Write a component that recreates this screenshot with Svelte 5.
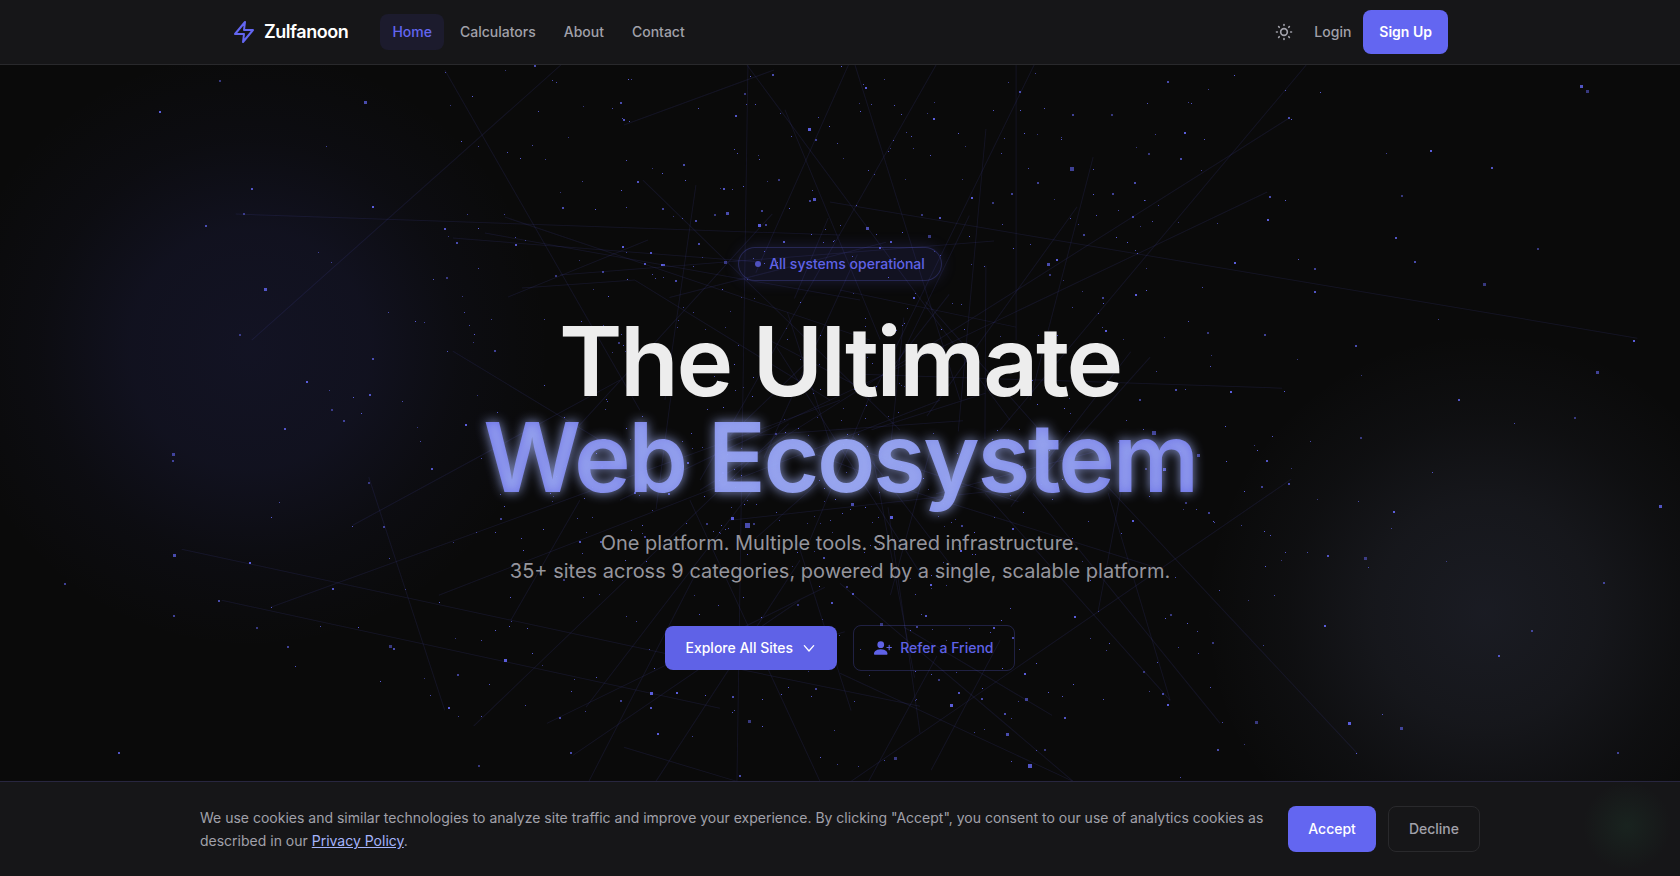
<script>
  const links = [
    { label: "Home", href: "#home", active: true },
    { label: "Calculators", href: "#calculators" },
    { label: "About", href: "#about" },
    { label: "Contact", href: "#contact" },
  ];

  let cookiesOpen = true;

  // x, y, size
  const stars = [
    [220, 81, 2], [365, 102, 3], [160, 112, 2], [326, 146, 1], [252, 189, 2], [244, 214, 2], [206, 226, 2], [373, 207, 2],
    [318, 252, 1], [265, 289, 3], [240, 335, 2], [388, 312, 1], [415, 321, 1], [424, 322, 1], [433, 279, 1], [447, 278, 2],
    [373, 359, 2], [307, 382, 2], [329, 390, 1], [370, 395, 2], [332, 410, 2], [402, 401, 1], [361, 413, 1], [344, 421, 2],
    [285, 429, 2], [417, 427, 1], [420, 441, 1], [466, 425, 2], [173, 454, 3], [445, 229, 2], [448, 236, 1], [457, 243, 2],
    [478, 228, 1], [504, 214, 1], [516, 245, 2], [450, 105, 1], [445, 72, 1], [461, 141, 1], [478, 146, 1], [538, 111, 1],
    [583, 106, 1], [621, 103, 2], [628, 79, 1], [631, 79, 1], [624, 120, 2], [568, 137, 1], [532, 145, 1], [520, 158, 1],
    [545, 159, 1], [626, 160, 1], [652, 168, 1], [684, 165, 2], [621, 190, 1], [582, 181, 1], [638, 182, 2], [560, 192, 1],
    [563, 208, 2], [595, 209, 1], [663, 209, 2], [736, 116, 2], [745, 94, 2], [773, 75, 2], [809, 129, 3], [816, 140, 2],
    [814, 199, 3], [779, 180, 2], [727, 213, 3], [759, 225, 3], [766, 225, 2], [784, 242, 2], [725, 262, 3], [699, 244, 2],
    [623, 247, 2], [603, 272, 2], [645, 264, 2], [556, 276, 2], [676, 281, 2], [474, 334, 1], [495, 351, 2], [447, 351, 1],
    [462, 296, 1], [478, 268, 1], [934, 119, 2], [1072, 169, 4], [1581, 86, 3], [1587, 91, 3], [1168, 82, 2], [1234, 75, 1],
    [1188, 102, 1], [1191, 103, 1], [1112, 115, 2], [1289, 118, 2], [1291, 119, 1], [1155, 134, 1], [1204, 139, 1],
    [1149, 154, 2], [1181, 159, 2], [1431, 151, 2], [1386, 153, 1], [1492, 168, 2], [1402, 196, 2], [1270, 197, 2],
    [1268, 220, 2], [1217, 223, 1], [1396, 238, 2], [1538, 249, 2], [1415, 262, 2], [1235, 263, 2], [1315, 269, 2],
    [1315, 292, 2], [1484, 284, 3], [1202, 287, 1], [1136, 295, 2], [1438, 319, 1], [1188, 321, 1], [1208, 333, 2],
    [1356, 346, 2], [1634, 341, 2], [1597, 372, 3], [1210, 366, 1], [1361, 375, 1], [1176, 390, 2], [1284, 391, 1],
    [1140, 400, 2], [1459, 400, 2], [1575, 418, 2], [1514, 423, 1], [1225, 426, 1], [1154, 433, 4], [1272, 436, 1],
    [1361, 438, 2], [1310, 441, 1], [1257, 450, 1], [1198, 455, 3], [940, 218, 2], [929, 236, 3], [1048, 264, 3],
    [1057, 260, 2], [1084, 235, 2], [1070, 218, 1], [1140, 226, 1], [1152, 221, 1], [972, 198, 2], [1035, 73, 1],
    [1044, 108, 1], [1037, 134, 1], [1028, 168, 1], [1116, 237, 1], [1158, 205, 1], [1096, 215, 1], [1050, 275, 2],
    [867, 228, 3], [914, 298, 2], [173, 461, 2], [432, 469, 2], [369, 483, 2], [279, 502, 1], [271, 517, 1], [384, 527, 2],
    [352, 526, 1], [453, 542, 1], [174, 555, 3], [250, 563, 2], [65, 584, 2], [333, 589, 2], [405, 589, 1], [219, 601, 2],
    [439, 602, 1], [174, 616, 2], [271, 607, 1], [257, 628, 2], [320, 626, 1], [358, 627, 1], [288, 647, 2], [295, 666, 1],
    [390, 646, 3], [394, 649, 2], [505, 660, 3], [458, 675, 2], [489, 684, 1], [424, 678, 1], [430, 695, 1], [449, 708, 2],
    [458, 716, 1], [481, 716, 1], [455, 638, 1], [481, 640, 1], [495, 630, 1], [511, 621, 1], [119, 753, 2], [479, 766, 2],
    [560, 718, 2], [651, 693, 3], [621, 701, 2], [651, 708, 2], [749, 721, 3], [747, 525, 5], [732, 518, 3], [501, 519, 2],
    [580, 542, 2], [564, 580, 2], [571, 753, 2], [658, 734, 2], [585, 711, 1], [1267, 461, 2], [1291, 468, 1],
    [1289, 484, 2], [1226, 461, 1], [1262, 487, 2], [1432, 472, 1], [1317, 499, 1], [1358, 501, 1], [1394, 512, 2],
    [1391, 528, 1], [1660, 506, 3], [1186, 503, 2], [1196, 509, 1], [1213, 521, 1], [1241, 525, 1], [1328, 556, 2],
    [1365, 558, 3], [1368, 567, 1], [1265, 566, 1], [1604, 583, 2], [1219, 590, 1], [1248, 600, 1], [1274, 595, 1],
    [1325, 626, 2], [1532, 631, 2], [1499, 656, 2], [1213, 643, 2], [1197, 631, 1], [1165, 618, 1], [1263, 645, 1],
    [1157, 662, 1], [1144, 672, 2], [1163, 694, 2], [1168, 705, 2], [1149, 691, 1], [1210, 687, 1], [1256, 722, 3],
    [1222, 722, 1], [1349, 723, 3], [1401, 728, 3], [1382, 714, 1], [1244, 744, 1], [1218, 750, 2], [1356, 753, 1],
    [1618, 753, 2], [1030, 766, 4], [895, 758, 3], [1007, 734, 3], [951, 705, 3], [1026, 699, 3], [1065, 718, 2],
    [1045, 750, 2], [1005, 714, 2], [891, 517, 3], [962, 526, 2], [1013, 529, 2], [881, 624, 3], [852, 504, 3],
    [931, 585, 2], [1098, 611, 1], [1164, 469, 3], [1146, 469, 2], [1180, 777, 1], [1073, 684, 1],
  ];

  // x1, y1, x2, y2
  const threads = [
    [445, 70, 640, 410], [252, 340, 561, 65], [236, 214, 840, 235], [624, 125, 774, 70], [748, 65, 737, 781],
    [747, 65, 1010, 420], [453, 238, 760, 262], [485, 233, 860, 300], [505, 217, 870, 340], [508, 297, 648, 240],
    [522, 288, 635, 280], [560, 275, 994, 241], [453, 351, 600, 440], [635, 280, 830, 400], [643, 180, 900, 430],
    [696, 185, 665, 400], [1016, 65, 1016, 340], [1034, 65, 870, 400], [936, 65, 700, 480], [1306, 65, 1000, 430],
    [1289, 118, 700, 490], [1267, 192, 620, 500], [830, 202, 1637, 338], [1093, 157, 1030, 400], [855, 65, 960, 400],
    [860, 374, 1282, 388], [1150, 357, 1040, 480], [840, 290, 1016, 327], [369, 477, 445, 710], [353, 525, 620, 380],
    [271, 607, 840, 400], [439, 595, 940, 400], [182, 549, 720, 665], [222, 600, 720, 708], [511, 620, 580, 500],
    [586, 707, 760, 480], [547, 723, 825, 587], [573, 755, 800, 600], [589, 781, 696, 573], [656, 781, 800, 560],
    [624, 747, 737, 781], [820, 781, 690, 500], [1291, 479, 851, 781], [1108, 487, 1357, 753], [1033, 493, 1220, 723],
    [985, 493, 1170, 700], [1108, 493, 1170, 700], [1121, 490, 1098, 611], [840, 583, 1073, 781], [840, 673, 1073, 781],
    [904, 627, 1052, 715], [1000, 640, 931, 770], [720, 665, 920, 706], [888, 507, 920, 733], [730, 520, 1000, 490],
  ];

  let seed = 41;
  function rand() {
    seed = (seed * 16807) % 2147483647;
    return seed / 2147483647;
  }
  function spread() {
    return (rand() + rand() + rand() + rand() - 2) / 2;
  }

  // fill the middle of the field
  for (let i = 0; i < 600; i++) {
    stars.push([
      Math.round(840 + spread() * 700),
      Math.round(430 + spread() * 740),
      rand() > 0.88 ? 2 : 1,
    ]);
  }
  for (let i = 0; i < 34; i++) {
    const x = 840 + spread() * 360;
    const y = 430 + spread() * 400;
    threads.push([x, y, x + spread() * 360, y + spread() * 560]);
  }

  function starOpacity(i) {
    return 0.5 + ((i * 7) % 5) * 0.1;
  }
</script>

<div class="page">
  <header class="header">
    <div class="bar">
      <a class="brand" href="#home">
        <svg width="24" height="24" viewBox="0 0 24 24" fill="none" stroke="currentColor" stroke-width="2" stroke-linecap="round" stroke-linejoin="round" aria-hidden="true">
          <path d="M13 2 3 14h9l-1 8 10-12h-9l1-8z" />
        </svg>
        <span>Zulfanoon</span>
      </a>
      <nav class="links" aria-label="Main">
        {#each links as link}
          <a class="link" class:active={link.active} href={link.href}>{link.label}</a>
        {/each}
      </nav>
      <div class="account">
        <button class="theme" type="button" aria-label="Toggle theme">
          <svg width="20" height="20" viewBox="0 0 24 24" fill="none" stroke="currentColor" stroke-width="2" stroke-linecap="round" aria-hidden="true">
            <circle cx="12" cy="12" r="4" />
            <path d="M12 3v1M12 20v1M3 12h1M20 12h1M18.4 5.6l-.7.7M6.3 17.7l-.7.7M5.6 5.6l.7.7M17.7 17.7l.7.7" />
          </svg>
        </button>
        <a class="link" href="#login">Login</a>
        <a class="btn primary signup" href="#signup">Sign Up</a>
      </div>
    </div>
  </header>

  <main class="hero">
    <div class="orb left"></div>
    <div class="orb right"></div>
    <svg class="field" viewBox="0 65 1680 788" preserveAspectRatio="xMidYMid slice" aria-hidden="true">
      {#each threads as [x1, y1, x2, y2]}
        <line {x1} {y1} {x2} {y2} />
      {/each}
      {#each stars as [x, y, size], i}
        <rect x={x - (size >> 1)} y={y - (size >> 1)} width={size} height={size} opacity={starOpacity(i)} />
      {/each}
    </svg>

    <div class="content">
      <p class="badge"><span class="dot"></span>All systems operational</p>
      <h1>
        <span class="line">The Ultimate</span>
        <span class="line glow">Web Ecosystem</span>
      </h1>
      <p class="lead">
        One platform. Multiple tools. Shared infrastructure.<br />
        35+ sites across 9 categories, powered by a single, scalable platform.
      </p>
      <div class="actions">
        <a class="btn primary" href="#sites">
          Explore All Sites
          <svg width="16" height="16" viewBox="0 0 24 24" fill="none" stroke="currentColor" stroke-width="2" stroke-linecap="round" stroke-linejoin="round" aria-hidden="true">
            <path d="m5 8.500 7 8 7-8" />
          </svg>
        </a>
        <a class="btn outline" href="#refer">
          <svg width="18" height="18" viewBox="0 0 16 16" fill="currentColor" aria-hidden="true">
            <path d="M1 14s-1 0-1-1 1-4 6-4 6 3 6 4-1 1-1 1zm5-6a3 3 0 1 0 0-6 3 3 0 0 0 0 6" />
            <path d="M13.500 5a.5.5 0 0 1 .5.5V7h1.500a.5.5 0 0 1 0 1H14v1.500a.5.5 0 0 1-1 0V8h-1.500a.5.5 0 0 1 0-1H13V5.500a.5.5 0 0 1 .5-.5" />
          </svg>
          Refer a Friend
        </a>
      </div>
    </div>
  </main>

  {#if cookiesOpen}
    <section class="cookies" aria-label="Cookie consent">
      <div class="cookies-inner">
        <p>
          We use cookies and similar technologies to analyze site traffic and improve your experience. By clicking "Accept", you consent to our use of analytics cookies as described in our <a href="#privacy">Privacy Policy</a>.
        </p>
        <div class="choices">
          <button class="btn primary" type="button" on:click={() => (cookiesOpen = false)}>Accept</button>
          <button class="btn quiet" type="button" on:click={() => (cookiesOpen = false)}>Decline</button>
        </div>
      </div>
    </section>
  {/if}
</div>

<style>
  :global(body) {
    margin: 0;
    background: #0a0a0a;
  }
  .page {
    height: 100vh;
    overflow: hidden;
    background: #0a0a0a;
    color: #ededed;
    font-family: Inter, sans-serif;
    font-size: 14px;
    line-height: 20px;
  }
  .page :global(*) {
    box-sizing: border-box;
  }
  a {
    color: inherit;
    text-decoration: none;
  }
  p,
  h1 {
    margin: 0;
  }
  svg {
    display: block;
    flex: none;
  }

  .header {
    position: relative;
    z-index: 10;
    background: #161618;
    border-bottom: 1px solid #29292c;
  }
  .bar {
    display: flex;
    align-items: center;
    height: 64px;
    max-width: 1280px;
    margin: 0 auto;
    padding: 0 32px;
  }
  .brand {
    display: flex;
    align-items: center;
    gap: 8px;
    margin-right: 32px;
    color: #fff;
    font-size: 18px;
    font-weight: 600;
    letter-spacing: -0.025em;
  }
  .brand svg {
    color: #6366f1;
  }
  .links {
    display: flex;
    gap: 4px;
  }
  .link {
    padding: 8px 12px;
    border-radius: 8px;
    color: #a1a1aa;
    font-weight: 500;
  }
  .link.active {
    background: #1c1b2d;
    color: #6366f1;
  }
  .account {
    display: flex;
    align-items: center;
    margin-left: auto;
  }
  .theme {
    padding: 8px;
    border: 0;
    border-radius: 8px;
    background: transparent;
    color: #a1a1aa;
    cursor: pointer;
  }

  .btn {
    display: inline-flex;
    align-items: center;
    justify-content: center;
    gap: 8px;
    padding: 12px 20px;
    border: 0;
    border-radius: 8px;
    font: inherit;
    font-weight: 500;
    white-space: nowrap;
    cursor: pointer;
  }
  .primary {
    background: #6366f1;
    color: #fff;
  }
  .signup {
    padding: 12px 16px;
    font-weight: 600;
  }
  .outline {
    border: 1px solid rgba(99, 102, 241, 0.25);
    color: #5f62e7;
  }
  .quiet {
    border: 1px solid #29292c;
    background: transparent;
    color: #a1a1aa;
  }

  .hero {
    position: relative;
    display: flex;
    align-items: center;
    justify-content: center;
    min-height: 90vh;
    overflow: hidden;
  }
  .orb {
    position: absolute;
    border-radius: 50%;
  }
  .left {
    top: -2%;
    left: -3%;
    width: 600px;
    height: 600px;
    background: radial-gradient(closest-side, rgba(88, 92, 241, 0.11), rgba(88, 92, 241, 0.09) 40%, rgba(88, 92, 241, 0.03) 70%, transparent);
  }
  .right {
    right: -5%;
    bottom: -5%;
    width: 560px;
    height: 560px;
    background: radial-gradient(closest-side, rgba(165, 180, 252, 0.1), rgba(160, 172, 230, 0.08) 40%, rgba(160, 172, 230, 0.03) 70%, transparent);
  }
  .field {
    position: absolute;
    inset: 0;
    width: 100%;
    height: 100%;
  }
  .field line {
    stroke: #6366f1;
    stroke-opacity: 0.11;
  }
  .field rect {
    fill: #6366f1;
    shape-rendering: crispEdges;
  }

  .content {
    position: relative;
    display: flex;
    flex-direction: column;
    align-items: center;
    text-align: center;
  }
  .badge {
    display: flex;
    align-items: center;
    gap: 8px;
    margin-bottom: 32px;
    padding: 6px 16px;
    border: 1px solid rgba(99, 102, 241, 0.25);
    border-radius: 999px;
    background: rgba(99, 102, 241, 0.1);
    box-shadow: 0 0 16px rgba(99, 102, 241, 0.2);
    color: #5f62e7;
    font-weight: 500;
  }
  .dot {
    width: 6px;
    height: 6px;
    border-radius: 50%;
    background: #4f51bd;
  }
  h1 {
    margin-bottom: 24px;
    font-size: 96px;
    font-weight: 600;
    line-height: 96px;
    letter-spacing: -0.025em;
  }
  .line {
    display: block;
  }
  /* the extra padding keeps the descender inside the clipped gradient */
  .glow {
    margin-bottom: -16px;
    padding-bottom: 16px;
    background: linear-gradient(90deg, #6f72f3, #98a6fa, #6f72f3);
    -webkit-background-clip: text;
    background-clip: text;
    color: transparent;
    text-shadow: 0 0 12px rgba(165, 180, 252, 0.85);
    opacity: 0.95;
  }
  .lead {
    margin-bottom: 40px;
    color: #95959d;
    font-size: 20px;
    line-height: 28px;
  }
  .actions {
    display: flex;
    align-items: center;
    gap: 16px;
  }
  .actions .primary {
    background: #5f62e7;
  }

  .cookies {
    position: fixed;
    right: 0;
    bottom: 0;
    left: 0;
    z-index: 20;
    padding: 24px;
    border-top: 1px solid #28263f;
    background: radial-gradient(circle at calc(100% - 53px) 44px, #19231f, rgba(25, 35, 31, 0) 44px) #161618;
  }
  .cookies-inner {
    display: flex;
    align-items: center;
    gap: 24px;
    max-width: 1280px;
    margin: 0 auto;
  }
  .cookies p {
    flex: 1;
    color: #a1a1aa;
    line-height: 23px;
  }
  .cookies p a {
    color: #a5b4fc;
    text-decoration: underline;
  }
  .choices {
    display: flex;
    gap: 12px;
  }
</style>
